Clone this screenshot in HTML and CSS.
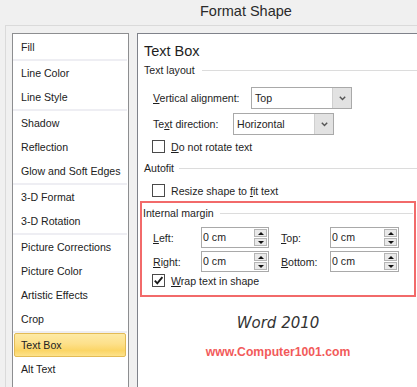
FILE: index.html
```html
<!DOCTYPE html>
<html>
<head>
<meta charset="utf-8">
<title>Format Shape</title>
<link rel="stylesheet" href="styles.css">
</head>
<body>
<div class="window">
  <div class="titlebar">Format Shape</div>
  <div class="frame">
    <ul class="nav">
      <li class="nav-item">Fill</li>
      <li class="nav-sep"></li>
      <li class="nav-item">Line Color</li>
      <li class="nav-item">Line Style</li>
      <li class="nav-sep"></li>
      <li class="nav-item">Shadow</li>
      <li class="nav-item">Reflection</li>
      <li class="nav-item">Glow and Soft Edges</li>
      <li class="nav-sep"></li>
      <li class="nav-item">3-D Format</li>
      <li class="nav-item">3-D Rotation</li>
      <li class="nav-sep"></li>
      <li class="nav-item">Picture Corrections</li>
      <li class="nav-item">Picture Color</li>
      <li class="nav-item">Artistic Effects</li>
      <li class="nav-item">Crop</li>
      <li class="nav-sep"></li>
      <li class="nav-item nav-item-selected">Text Box</li>
      <li class="nav-item">Alt Text</li>
    </ul>

    <section class="panel">
      <h1 class="panel-title">Text Box</h1>

      <div class="group-label"><span>Text layout</span><i class="rule"></i></div>

      <div class="field-row row-valign">
        <span class="field-label label-valign"><u>V</u>ertical alignment:</span>
        <div class="combo">
          <span class="combo-text">Top</span>
          <span class="combo-btn"><svg width="7" height="5" viewBox="0 0 7 5"><path d="M0.8 0.8 L3.5 3.6 L6.2 0.8" fill="none" stroke="#555" stroke-width="1.4"/></svg></span>
        </div>
      </div>

      <div class="field-row row-tdir">
        <span class="field-label label-tdir">Te<u>x</u>t direction:</span>
        <div class="combo">
          <span class="combo-text">Horizontal</span>
          <span class="combo-btn"><svg width="7" height="5" viewBox="0 0 7 5"><path d="M0.8 0.8 L3.5 3.6 L6.2 0.8" fill="none" stroke="#555" stroke-width="1.4"/></svg></span>
        </div>
      </div>

      <div class="check-row row-rotate">
        <span class="checkbox"></span>
        <span class="check-label"><u>D</u>o not rotate text</span>
      </div>

      <div class="group-label group-autofit"><span>Autofit</span><i class="rule"></i></div>

      <div class="check-row row-resize">
        <span class="checkbox"></span>
        <span class="check-label">Resize shape to <u>f</u>it text</span>
      </div>

      <div class="highlight">
        <div class="group-label group-margin"><span>Internal margin</span><i class="rule"></i></div>

        <div class="spin-row spin-row-first">
          <span class="spin-label"><u>L</u>eft:</span>
          <div class="spin"><span class="spin-text">0 cm</span><span class="spin-btns"><span class="spin-up"></span><span class="spin-down"></span></span></div>
          <span class="spin-label spin-label-right"><u>T</u>op:</span>
          <div class="spin spin-wide"><span class="spin-text">0 cm</span><span class="spin-btns"><span class="spin-up"></span><span class="spin-down"></span></span></div>
        </div>

        <div class="spin-row">
          <span class="spin-label"><u>R</u>ight:</span>
          <div class="spin"><span class="spin-text">0 cm</span><span class="spin-btns"><span class="spin-up"></span><span class="spin-down"></span></span></div>
          <span class="spin-label spin-label-right"><u>B</u>ottom:</span>
          <div class="spin spin-wide"><span class="spin-text">0 cm</span><span class="spin-btns"><span class="spin-up"></span><span class="spin-down"></span></span></div>
        </div>

        <div class="check-row row-wrap">
          <span class="checkbox"><svg width="11" height="11" viewBox="0 0 11 11"><path d="M1.8 5.6 L4.3 8.3 L9.4 2.2" fill="none" stroke="#1a1a1a" stroke-width="1.9"/></svg></span>
          <span class="check-label"><u>W</u>rap text in shape</span>
        </div>
      </div>

      <div class="caption">Word 2010</div>
      <div class="site">www.Computer1001.com</div>
    </section>
  </div>
</div>
</body>
</html>
```

FILE: styles.css
```css
* { box-sizing: border-box; }

html, body {
  margin: 0;
  padding: 0;
  background: #f0f0f0;
  overflow: hidden;
}

body {
  font-family: "Liberation Sans", Arial, sans-serif;
  font-size: 10.6px;
  color: #1e1e1e;
}

.window {
  width: 417px;
  height: 387px;
  overflow: hidden;
}

.titlebar {
  height: 25px;
  line-height: 23px;
  padding-left: 200px;
  font-size: 14.5px;
  color: #2a2a2a;
}

.frame {
  margin-left: 5px;
  border-top: 1px solid #dadada;
  border-left: 1px solid #dadada;
  padding: 7px 0 0 6px;
  display: flex;
  align-items: flex-start;
  gap: 8px;
  width: 440px;
}

/* left navigation list */
.nav {
  list-style: none;
  margin: 0;
  padding: 1px 0 0 0;
  width: 117px;
  height: 380px;
  flex: none;
  background: #fff;
  border: 1px solid #8d8e90;
}

.nav-item {
  height: 24px;
  line-height: 24px;
  padding-left: 8px;
  color: #222;
  white-space: nowrap;
}

.nav-sep {
  height: 2px;
  margin-right: 1px;
  background: #eeeef3;
}

.nav-item-selected {
  margin: 0 2px 0 1px;
  padding-left: 6px;
  line-height: 22px;
  border: 1px solid #e3bb55;
  border-radius: 2px;
  background: linear-gradient(#fdeaa6 0%, #fde08a 45%, #fbd566 75%, #fde28a 100%);
}

/* right panel */
.panel {
  flex: none;
  width: 282px;
  height: 380px;
  background: #fff;
  border: 1px solid #7f828a;
  padding: 7px 0 0 6px;
}

.panel-title {
  margin: 0;
  height: 20px;
  line-height: 20px;
  font-size: 14.5px;
  font-weight: normal;
  color: #1e1e1e;
}

.group-label {
  display: flex;
  align-items: center;
  height: 16px;
  line-height: 16px;
  margin-top: 1px;
  white-space: nowrap;
}

.rule {
  flex: 1;
  height: 1px;
  margin-left: 7px;
  background: #dcdcdc;
}

.group-autofit { margin-top: 7px; }
.group-autofit .rule { margin-left: 5px; }

.field-row {
  display: flex;
  align-items: center;
  height: 22px;
  padding-left: 9px;
}

.row-valign { margin-top: 9px; }
.row-tdir { margin-top: 4px; }

.field-label { white-space: nowrap; }
.label-valign { width: 98px; }
.label-tdir { width: 80px; }

.combo {
  display: flex;
  width: 101px;
  height: 22px;
  border: 1px solid #a9a9a9;
  background: #fff;
}

.combo-text {
  flex: 1;
  padding-left: 3px;
  line-height: 20px;
}

.combo-btn {
  width: 19px;
  background: #e2e2e2;
  border-left: 1px solid #cfcfcf;
  display: flex;
  align-items: center;
  justify-content: center;
}

.check-row {
  display: flex;
  align-items: center;
  height: 13px;
  padding-left: 8px;
}

.row-rotate { margin-top: 5px; }
.row-resize { margin-top: 8px; }

.checkbox {
  width: 13px;
  height: 13px;
  flex: none;
  border: 1px solid #4a4a4a;
  background: #fff;
  display: flex;
  align-items: center;
  justify-content: center;
}

.check-label {
  margin-left: 6px;
  white-space: nowrap;
}

/* red annotation around Internal margin */
.highlight {
  width: 276px;
  margin: 4px 0 0 -4px;
  border: 2px solid #f26a6a;
  padding: 2px 0 8px 0;
}

.group-margin { margin-top: 0; padding-left: 1px; }
.group-margin .rule { margin-left: 6px; margin-right: 1px; }

.spin-row {
  display: flex;
  align-items: center;
  height: 21px;
  margin-top: 3px;
  padding-left: 11px;
}

.spin-row-first { margin-top: 6px; }

.spin-label {
  width: 48px;
  white-space: nowrap;
}

.spin-label-right {
  width: 49px;
  margin-left: 12px;
}

.spin {
  display: flex;
  width: 68px;
  height: 21px;
  border: 1px solid #a9a9a9;
  background: #fff;
}

.spin-wide { width: 69px; }

.spin-text {
  flex: 1;
  padding-left: 1px;
  line-height: 19px;
}

.spin-btns {
  width: 13px;
  margin: 1px 1px 1px 0;
  display: flex;
  flex-direction: column;
  gap: 1px;
}

.spin-up, .spin-down {
  flex: 1;
  background: #e9e9e9;
  border: 1px solid #b5b5b5;
  display: flex;
  align-items: center;
  justify-content: center;
}

.spin-up::after {
  content: "";
  border-left: 3px solid transparent;
  border-right: 3px solid transparent;
  border-bottom: 3px solid #111;
}

.spin-down::after {
  content: "";
  border-left: 3px solid transparent;
  border-right: 3px solid transparent;
  border-top: 3px solid #111;
}

.row-wrap {
  margin-top: 2px;
  padding-left: 10px;
}

.caption {
  margin-top: 16px;
  height: 20px;
  line-height: 20px;
  text-align: center;
  font-family: "DejaVu Sans", sans-serif;
  font-style: italic;
  font-size: 15px;
  color: #333;
  margin-left: -6px;
}

.site {
  margin-top: 11px;
  height: 16px;
  line-height: 16px;
  text-align: center;
  font-family: "Liberation Sans", Arial, sans-serif;
  font-weight: bold;
  font-size: 12.2px;
  color: #f25a5a;
  margin-left: -6px;
}
```
